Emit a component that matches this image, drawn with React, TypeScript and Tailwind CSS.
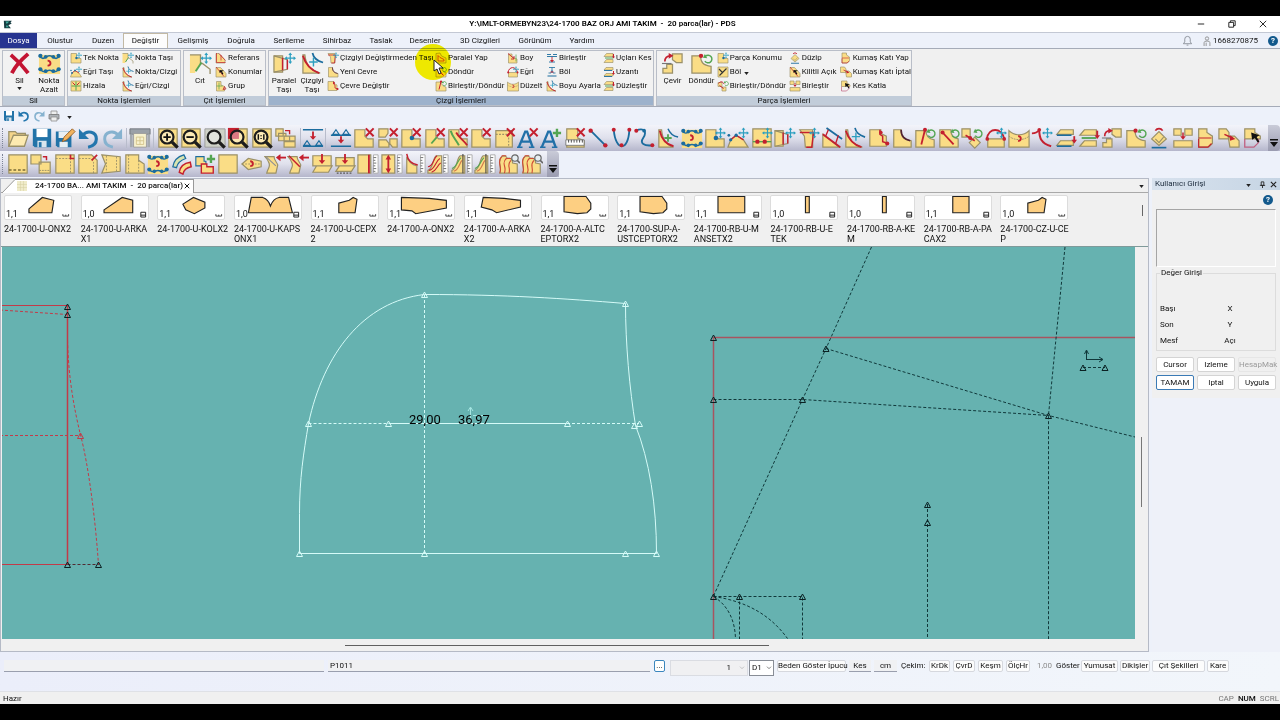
import type { ReactNode } from "react";

const Y = "#fadd86";
const O = "#9a9068";
const R = "#c4202f";
const B = "#1b6c9e";
const C = "#2d9fc0";
const G = "#53a552";

const yel = { fill: Y, stroke: O, strokeWidth: 1.3 };
const line = (c: string, w = 1.8) => ({ fill: "none", stroke: c, strokeWidth: w });

const cross = <path d="M14 1.5l8.5 8.5M22.5 1.5L14 10" {...line(R, 2.2)} />;
const plus = <path d="M18.5 2v9M14 6.5h9" {...line(G, 2.6)} />;
const move = (
  <g>
    <path d="M18 2v9M13.500 6.500h9" {...line(C, 1.3)} />
    <path d="M18 .5l2 2.500h-4zM18 12.500l2-2.500h-4zM12 6.500l2.500-2v4zM24 6.500l-2.500-2v4z" fill={C} />
  </g>
);
const turn = (
  <g>
    <path d="M16 4.500a4 4 0 1 1-.5 5" {...line(G, 1.5)} />
    <path d="M13.500 6l4.500.5-2.500-4.500z" fill={G} />
  </g>
);
const ruler = (
  <g>
    <path d="M18 2h5v20h-5z" fill="#fff" stroke="#aaa" strokeWidth="1" />
    <path d="M18 5h3M18 8h2M18 11h3M18 14h2M18 17h3M18 20h2" {...line("#666", 1)} />
  </g>
);
const lens = (
  <g>
    <circle cx="11" cy="11" r="7" fill="#ffffff66" stroke="#1d1d1d" strokeWidth="2.4" />
    <path d="M16.500 16.500l6 6" {...line("#1d1d1d", 3.6)} />
  </g>
);
const notched = <path d="M2 3h11v7l3 3h6v9H2z" {...yel} />;
const square = <path d="M2 2h20v20H2z" {...yel} />;

const ICONS = {
  folder: (
    <g>
      <path d="M2 21V5h7l2 2h9v3" fill="#f4d58a" stroke={O} strokeWidth="1.4" />
      <path d="M2 21L7 9h16l-4 12z" fill="#fdeab0" stroke={O} strokeWidth="1.4" />
    </g>
  ),
  save: (
    <g>
      <path d="M2 2h20v20H4l-2-2z" fill="#2273a8" />
      <path d="M6 2h12v9H6z" fill="#fff" />
      <path d="M7 15h10v7H7z" fill="#d9e6ee" />
      <path d="M8.500 16.500h3V22h-3z" fill="#2273a8" />
    </g>
  ),
  saveEdit: (
    <g>
      <path d="M2 5h17v17H4l-2-2z" fill="#2273a8" />
      <path d="M5 5h11v7H5zM6 16h9v6H6z" fill="#e8eff4" />
      <path d="M9 16l2-5 9-9 3 3-9 9z" fill="#f2b45f" stroke="#95602a" strokeWidth="1" />
    </g>
  ),
  undo: (
    <g>
      <path d="M5 9c5-6 15-4 15 4 0 5-4 8-9 9" {...line("#2476ad", 3.4)} />
      <path d="M1 2v11h11z" fill="#2476ad" />
    </g>
  ),
  redo: (
    <g>
      <path d="M19 9C14 3 4 5 4 13c0 5 4 8 9 9" {...line("#86b2cf", 3.2)} />
      <path d="M23 2v11H12z" fill="#86b2cf" />
    </g>
  ),
  plot: (
    <g>
      <path d="M1 2h22v6H1z" fill="#9ba1a8" stroke="#70757b" />
      <path d="M5 7h14v15H5z" fill="#f8f2cf" stroke="#999" />
      <path d="M8 11h8v8H8zM12 11v8M8 15h8" {...line("#d3c48c", 1)} />
      <path d="M1 8h3v14H1zM20 8h3v14h-3z" fill="#a4a9af" />
    </g>
  ),
  printer: (
    <g>
      <path d="M6 2h12v7H6z" fill="#eee" stroke="#888" strokeWidth="1.500" />
      <path d="M2 9h20v9H2z" fill="#aeb2b6" stroke="#777" strokeWidth="1.500" />
      <path d="M6 14h12v8H6z" fill="#eee" stroke="#888" strokeWidth="1.500" />
    </g>
  ),
  zoomIn: (
    <g>
      {square}
      {lens}
      <path d="M11 7v8M7 11h8" {...line("#111", 2)} />
    </g>
  ),
  zoomOut: (
    <g>
      {square}
      {lens}
      <path d="M7 11h8" {...line("#111", 2)} />
    </g>
  ),
  zoomFit: (
    <g>
      <path d="M1 2h22v20H1z" fill="#cfd2c8" stroke="#999" />
      {lens}
    </g>
  ),
  zoomArea: (
    <g>
      {square}
      <path d="M1 1h12v12H1z" fill={R} />
      {lens}
    </g>
  ),
  zoomOne: (
    <g>
      {square}
      {lens}
      <path d="M8 8v6M14 8v6M11 9v1M11 12v1" {...line("#111", 1.6)} />
    </g>
  ),
  arrange: (
    <g>
      <path d="M2 2h8v8H2zM5 7h8v8H5z" {...yel} />
      <path d="M11 10h12v5H11zM11 16h12v6H11zM17 10v5" {...yel} />
      <path d="M12 4h5v4" {...line(R, 1.5)} />
    </g>
  ),
  alignDown: (
    <g>
      <path d="M1 3h22M1 21h22" {...line(B, 1.4)} />
      <path d="M12 5v8" {...line(R, 2)} />
      <path d="M8.500 10h7L12 14z" fill={R} />
      <path d="M2 20l3.500-5L9 20zM15 20l3.500-5 3.500 5z" {...line(B, 1.2)} />
    </g>
  ),
  alignUp: (
    <g>
      <path d="M3 8l3.500-5L10 8zM14 8l3.500-5L21 8z" {...line(B, 1.2)} />
      <path d="M1 9h22M1 21h22" {...line(B, 1.4)} />
      <path d="M12 10v5" {...line(R, 2)} />
      <path d="M8.500 14h7L12 18z" fill={R} />
    </g>
  ),
  pieceX: <g>{notched}{cross}</g>,
  piecesX: (
    <g>
      <path d="M2 2h10v5l-3 4H2zM2 14h8l3 4v4H2zM14 13h8v9h-5l-3-4z" {...yel} />
      {cross}
    </g>
  ),
  pointX: <g>{notched}<circle cx="13" cy="12" r="2.500" fill={B} />{cross}</g>,
  notchX: <g>{notched}<path d="M8 18l6-7" {...line(G, 2)} />{cross}</g>,
  lineX: (
    <g>
      {notched}
      <path d="M4 4c2 7 6 10 9 16" {...line(G, 2.2)} />
      <path d="M10 6c3 6 8 8 12 14" {...line(R, 2)} />
      {cross}
    </g>
  ),
  dashX: (
    <g>
      <path d="M2 4h18v18H2z" {...yel} />
      <path d="M2 8h14v14" strokeDasharray="2 1.500" {...line(O, 1.2)} />
      {cross}
    </g>
  ),
  textX: (
    <g>
      <path d="M2 22l7-17h2l6 17M5 16h9" {...line("#2270a8", 2.6)} />
      <path d="M0 22h6M13 22h6" {...line("#2270a8", 1.6)} />
      {cross}
    </g>
  ),
  textPlus: (
    <g>
      <path d="M2 22l7-17h2l6 17M5 16h9" {...line("#2270a8", 2.6)} />
      <path d="M0 22h6M13 22h6" {...line("#2270a8", 1.6)} />
      {plus}
    </g>
  ),
  rulerX: (
    <g>
      <path d="M3 2h12v10l7 3v7H3z" {...yel} />
      <path d="M2 14h20v6H2z" fill="#fff" stroke="#777" />
      <path d="M5 14v3M8 14v3M11 14v3M14 14v3M17 14v3M20 14v3" {...line("#444", 1)} />
      {cross}
    </g>
  ),
  segment: (
    <g>
      <path d="M4 4l16 16" {...line(B, 2)} />
      <circle cx="4" cy="4" r="2.400" fill={R} />
      <circle cx="20" cy="20" r="2.400" fill={R} />
    </g>
  ),
  curveU: (
    <g>
      <path d="M3 3c2 24 16 24 17 0" {...line(B, 2)} />
      <circle cx="3" cy="3" r="2.200" fill={R} />
      <circle cx="20" cy="3" r="2.200" fill={R} />
      <circle cx="11.500" cy="20" r="2.200" fill={R} />
    </g>
  ),
  curveS: (
    <g>
      <path d="M2 4c10-4 12 2 8 8s1 9 10 8" {...line(B, 2)} />
      <circle cx="2.500" cy="4" r="2.200" fill={R} />
      <circle cx="11" cy="4" r="2" fill={B} />
      <circle cx="20" cy="20" r="2.200" fill={R} />
    </g>
  ),
  curvePlus: (
    <g>
      <path d="M2 3v19h16c-8-2-12-8-13-19z" {...yel} />
      <path d="M3 4c2 10 7 15 15 17" {...line(R, 2)} />
      <path d="M12 2c2 5 5 8 11 9" {...line(B, 1.600)} />
      <path d="M12 8v8M8 12h8" {...line(G, 2)} />
    </g>
  ),
  reduce: (
    <g>
      <path d="M1 3h22v20H1z" fill={Y} />
      <path d="M1 4c5 6 7 0 11 0s6 6 11 0M1 17c5 6 7 2 11 2s6 4 11-2" {...line(B, 1.600)} />
      <g fill={B}>
        <circle cx="2.500" cy="4" r="2.200" /><circle cx="8" cy="5" r="2" /><circle cx="16" cy="5" r="2" /><circle cx="21.500" cy="4" r="2.200" />
        <circle cx="2.500" cy="18" r="2.200" /><circle cx="8" cy="20" r="2" /><circle cx="16" cy="20" r="2" /><circle cx="21.500" cy="18" r="2.200" />
      </g>
      <path d="M10 9c4 0 4 6 0 5" {...line(R, 2)} />
    </g>
  ),
  pointMove: <g>{notched}<circle cx="13" cy="12" r="2.500" fill={B} />{move}</g>,
  curveMove: (
    <g>
      <path d="M1 22L4 14l6-5 8 5 5 8z" {...yel} />
      <path d="M4 14l6-5 8 5" {...line(R, 1.500)} />
      <g fill={B}><circle cx="4" cy="14" r="1.800" /><circle cx="10" cy="9" r="1.800" /><circle cx="2" cy="9" r="1.500" /></g>
      {move}
    </g>
  ),
  horizMove: (
    <g>
      {square}
      <path d="M2 16h20" {...line(G, 1.500)} />
      <circle cx="7" cy="16" r="2.400" fill={R} /><circle cx="15" cy="16" r="2.400" fill={R} />
      {move}
    </g>
  ),
  parallel: (
    <g>
      <path d="M1 4h9v17H1z" {...yel} />
      <path d="M1 4l14 4v10L1 21" {...line(O, 1.300)} />
      <path d="M10 6v13M15 8v10" {...line(R, 1.500)} />
      {move}
    </g>
  ),
  parallelTwo: (
    <g>
      <path d="M2 3h14v19H8l-1-12z" {...yel} />
      <path d="M2 6h15l-2 16H9" {...line(R, 1.600)} />
      {move}
    </g>
  ),
  slopes: (
    <g>
      <path d="M2 8v14h18z" {...yel} />
      <path d="M2 8l19 14" {...line(R, 2)} />
      <path d="M6 1l17 12" {...line(B, 2)} />
      <path d="M8 3L5 10M19 9l-3 9" {...line(R, 1.500)} />
    </g>
  ),
  lineMove: (
    <g>
      <path d="M2 3v19h18C9 19 5 13 4 3z" {...yel} />
      <path d="M2 4c3 10 8 15 17 18" {...line(R, 2)} />
      <path d="M12 1c1 5 4 8 11 10" {...line(B, 1.800)} />
      <path d="M13 6v9M8.500 10.500h9" {...line(C, 1.500)} />
    </g>
  ),
  contour: (
    <g>
      <path d="M2 3h12v4l6 3v11H2z" {...yel} />
      <path d="M13 3v5l3 2v6l6 2" {...line(R, 1.600)} />
      <circle cx="14" cy="6" r="2" fill={R} /><circle cx="21" cy="18" r="2.200" fill={R} />
    </g>
  ),
  corner: (
    <g>
      <path d="M3 3h8c0 8 3 11 11 12v7H3z" {...yel} />
      <path d="M11 3c0 8 4 10 10 12" {...line("#512130", 1.800)} />
    </g>
  ),
  rotateLine: (
    <g>
      <path d="M2 4h11c0 6 3 9 9 10v8H2z" {...yel} />
      <path d="M12 3L8 19" {...line(R, 2)} /><circle cx="12" cy="3" r="2.200" fill={R} />
      {turn}
    </g>
  ),
  rotateDiag: (
    <g>
      <path d="M2 3h12c0 6 2 9 8 10v9H2z" {...yel} />
      <path d="M5 6l12 13" {...line(R, 2)} /><circle cx="5" cy="6" r="2.200" fill={R} />
      {turn}
    </g>
  ),
  rotatePieces: (
    <g>
      <path d="M1 2h9v9H1zM9 17l6-6 6 6-6 6z" {...yel} />
      <path d="M5 9l10 6" {...line(R, 1.600)} /><circle cx="10" cy="12" r="2.200" fill={R} />
      {turn}
    </g>
  ),
  arcMove: (
    <g>
      <path d="M3 13h18v9H3z" {...yel} />
      <path d="M2 13C4 0 18 0 21 13" {...line(R, 2)} />
      <circle cx="2.500" cy="13" r="2" fill={R} /><circle cx="21" cy="13" r="2" fill={R} />
      {move}
    </g>
  ),
  smooth: (
    <g>
      <path d="M1 4c6 6 16 6 22 0v18H1z" {...yel} />
      <path d="M1 10c6 5 16 5 22 0" strokeDasharray="2 1" {...line(O, 1)} />
      <path d="M11 10c4 0 4 6 0 5" {...line(R, 2)} />
    </g>
  ),
  hookMove: (
    <g>
      <path d="M9 3c0 9 2 15 13 18" {...line(R, 2.200)} />
      <path d="M1 7c4 0 6-1 8-4" {...line(R, 2)} />
      <circle cx="9" cy="3" r="2" fill={R} />
      {move}
    </g>
  ),
  extendOne: (
    <g>
      <path d="M2 8l4-5h14v5zM2 20l4-5h14v5z" {...yel} />
      <path d="M2 9h16M2 21h16" {...line(B, 1.800)} />
      <path d="M21 10v6" {...line(R, 2)} /><path d="M18 14h6l-3 4z" fill={R} />
    </g>
  ),
  extendTwo: (
    <g>
      <path d="M2 9l5-6h13v6zM2 21l5-6h13v6z" {...yel} />
      <path d="M4 12h16" {...line(G, 2)} />
      <path d="M21 4v7" {...line(R, 2)} /><path d="M18 9h6l-3 4z" fill={R} />
    </g>
  ),
  flip: (
    <g>
      <path d="M12 2h10v9h-6l-4-3zM2 22h10v-9H6v4H2z" {...yel} />
      <path d="M1 12h10" {...line("#777", 1.200)} />
      <path d="M4 10c0-4 2-6 6-6" {...line(R, 1.800)} /><path d="M8 1l5 3-5 3z" fill={R} />
    </g>
  ),
  rotate: (
    <g>
      <path d="M2 4h9c0 7 3 10 11 11v7H2z" {...yel} />
      <circle cx="11.500" cy="4" r="2.300" fill={R} />
      {turn}
    </g>
  ),
  ninety: (
    <g>
      <path d="M4 13l8-8 8 8-8 7z" {...yel} />
      <path d="M8 13l4 4 5-6" {...line(O, 1.200)} />
      <path d="M8 4c2-3 6-3 8 0" {...line(R, 1.800)} />
      <path d="M4 22.500h16" {...line(B, 1.800)} />
    </g>
  ),
  join: (
    <g>
      <path d="M2 2h8v7H2zM14 2h8v7h-8zM2 15h20v7H2z" {...yel} />
      <path d="M12 6v5" {...line(R, 1.600)} /><path d="M9 10h6l-3 4z" fill={R} />
    </g>
  ),
  fold: (
    <g>
      <path d="M4 2h9v4l6 4v8l-4 4H4z" {...yel} />
      <path d="M4 12h14M4 13v9h10l4-4" {...line(R, 1.200)} />
    </g>
  ),
  foldCancel: (
    <g>
      <path d="M1 2h8l3 4v7H1zM11 10h7l5 5v7H13z" {...yel} />
      <path d="M7 8l9 4" {...line(R, 1.500)} /><path d="M13 9l6 4-6 2z" fill={R} />
    </g>
  ),
  foldCut: (
    <g>
      <path d="M3 2h11v4l6 4v3H3z" {...yel} />
      <path d="M3 13v9h10l5-5v-4" {...line("#c06080", 1.400)} />
      <path d="M10 6l9 3-3 2 3 5-2 1-3-5-3 2z" fill="#111" />
    </g>
  ),
  hem: <g><path d="M2 2h20v20H2z" {...yel} /><path d="M2 18.500h20" strokeDasharray="3 2" {...line("#7b6b35", 1.500)} /></g>,
  copyRect: (
    <g>
      <path d="M1 2h11v10H1zM10 10h12v12H10z" {...yel} />
      <path d="M14 4h4v4" {...line(R, 1.600)} /><path d="M10 19h12" strokeDasharray="2 1" {...line(O, 1)} />
    </g>
  ),
  cornerRect: <g>{square}<path d="M2 6h20M18 2v20" strokeDasharray="2 1.500" {...line(O, 1)} /><path d="M18 2v4h4" {...line(R, 1.800)} /></g>,
  chamfer: <g><path d="M2 2h14l6 6v14H2z" {...yel} /><path d="M2 6h13l3 4v12" strokeDasharray="2 1.500" {...line(O, 1)} /><path d="M22 2l-6 6" {...line(R, 1.800)} /></g>,
  trapezoid: <g><path d="M2 2l20 2v16L2 22l4-10z" {...yel} /><path d="M7 3v18M18 4v16" strokeDasharray="2 1.500" {...line(O, 1)} /></g>,
  notchDash: <g><path d="M2 2h14v6l6 4v10H2z" {...yel} /><path d="M5 2v20M16 8v14" strokeDasharray="2 1.500" {...line(O, 1)} /></g>,
  arcs: (
    <g>
      <path d="M2 15C3 8 7 4 14 2l2 4C10 8 7 11 6 16z" fill="#d8e3b0" stroke={B} strokeWidth="1.400" />
      <path d="M9 21c1-7 5-10 12-11l1 5c-5 1-8 3-9 8z" fill={Y} stroke={R} strokeWidth="1.600" />
    </g>
  ),
  combine: (
    <g>
      <path d="M2 4h9v5h2v5H2z" fill={Y} stroke={B} strokeWidth="1.200" />
      <path d="M8 12h6v3h7v7H8z" fill={Y} stroke={R} strokeWidth="1.500" />
      {plus}
    </g>
  ),
  square: <path d="M2 2h20v20H2z" {...yel} />,
  dart: (
    <g>
      <path d="M1 12l7-6 14 3v6L8 18z" {...yel} />
      <path d="M1 12h21" strokeDasharray="2 1.500" {...line(O, 1)} />
      <path d="M10 9c4 0 4 6 0 5" {...line(R, 2)} />
    </g>
  ),
  wave: (
    <g>
      <path d="M3 22c1-6 5-7 2-12-1-3-3-5-4-6h10c0 4 3 6 4 9l-2 9z" {...yel} />
      <path d="M2 4l11 10" {...line("#8d8f96", 1.300)} />
      <path d="M17 5h7" {...line(R, 2)} /><path d="M13 5l5-4v8z" fill={R} />
    </g>
  ),
  waveLine: (
    <g>
      <path d="M3 22c1-6 5-7 2-12-1-3-3-5-4-6h10c0 4 3 6 4 9l-2 9z" {...yel} />
      <path d="M2 3l12 12" {...line(R, 1.600)} />
      <path d="M17 5h7" {...line(R, 2)} /><path d="M13 5l5-4v8z" fill={R} />
    </g>
  ),
  press: (
    <g>
      <path d="M2 3h20v11H2zM2 21l4-7h17l-4 7z" {...yel} />
      <path d="M12 1v8" {...line(R, 2)} /><path d="M8.500 8h7L12 12z" fill={R} />
    </g>
  ),
  pressDash: (
    <g>
      <path d="M2 5h20v9H2zM2 20l4-6h17l-4 6z" {...yel} />
      <path d="M3 22h16" strokeDasharray="2 1.500" {...line("#555", 1.300)} />
      <path d="M12 1v8" {...line(R, 2)} /><path d="M8.500 8h7L12 12z" fill={R} />
    </g>
  ),
  redRuler: <g><path d="M1 2h14v20H1z" {...yel} /><path d="M13 2v20" {...line(R, 2)} />{ruler}</g>,
  heightRuler: (
    <g>
      <path d="M1 2h14v20H1z" {...yel} />
      <path d="M8 4v16" {...line(R, 2)} /><path d="M5 7h6L8 2zM5 17h6l-3 5z" fill={R} />{ruler}
    </g>
  ),
  curveRuler: <g><path d="M3 4c2 6 5 9 11 10v8H3z" {...yel} /><path d="M3 1c1 7 5 11 12 12" {...line(R, 1.600)} />{ruler}</g>,
  fan: (
    <g>
      <path d="M1 19c6-2 5-13 9-16h6v19H1z" {...yel} />
      <path d="M1 15c6 0 6-10 10-12M2 19c7-1 7-10 12-13M5 21c6-2 6-8 10-10" {...line(R, 1.200)} />{ruler}
    </g>
  ),
  fanColor: (
    <g>
      <path d="M1 19c6-2 5-13 9-16h5v19H1z" {...yel} />
      <path d="M1 17c6-2 6-9 10-12" {...line(G, 1.200)} /><path d="M3 20c6-2 6-9 9-12" {...line("#d0784a", 1.200)} /><path d="M13 1v21" {...line("#444", 1.200)} />{ruler}
    </g>
  ),
  layers: (
    <g>
      <path d="M2 22c3-8-4-12 2-18 3-2 6 0 6 2 3-1 6 0 6 5l5 1v10z" {...yel} />
      <path d="M2 22c3-8-4-12 2-18M7 22c3-8-4-10 2-16M12 22c2-7-3-8 2-14M4 3h5M9 6h5" {...line("#cf4a35", 1.200)} />
      <circle cx="18.500" cy="5.500" r="3.500" fill="#e6eef2" stroke="#666" strokeWidth="1.300" /><path d="M21 8l3 3" {...line("#666", 1.800)} />
    </g>
  ),
  deleteBig: <path d="M3 3c6 5 12 11 18 19M21 2C14 8 8 14 4 22" {...line("#c31432", 4)} />,
  notchBig: (
    <g>
      <path d="M1 3h11v9l-6 10H1z" fill={Y} />
      <path d="M1 3h11v9h2l8 6v5" {...line(O, 1.400)} /><path d="M13 11l-6 9" {...line(G, 2)} />{move}
    </g>
  ),
  reference: (
    <g>
      <path d="M2 3h6l12 13v6H2z" {...yel} />
      <path d="M3 2v19h18M8 3l13 14M12 6v11" {...line(R, 1.400)} />
    </g>
  ),
  positions: <g><path d="M2 3h9l11 12v7H2z" {...yel} /><path d="M2 2l16 19" {...line(R, 1.500)} /><path d="M9 8l9 1-4 2 3 5-3 1-2-5-3 2z" fill="#111" /></g>,
  group: <g><path d="M3 3h9v7l7 3v9H3z" {...yel} /><path d="M8 5v14M3 12h12" {...line(G, 1.400)} /><path d="M19 13l3 5-6 1z" {...line(R, 1.500)} /></g>,
  align: <g>{square}<path d="M12 3v18M3 12h18" {...line(G, 2)} /><path d="M5 5l5 5M19 5l-5 5" {...line(R, 2)} /></g>,
  parallelMake: <g><path d="M2 22V3l8-1 3 6 9 4v10z" {...yel} /><path d="M6 18V7l4 4 8 4v3z" {...line(R, 1.400)} /></g>,
  length: <g><path d="M3 4h7v6l10 4v8H3z" {...yel} /><path d="M2 3l12 10M14 8v6H8" {...line(R, 1.800)} /><path d="M18 5v14" {...line(G, 1.500)} /></g>,
  splitLine: <g><path d="M3 20h18" {...line(B, 2)} /><path d="M5 14h5l2-5 2 5h5M12 3v7M6 3h12" {...line(B, 1.600)} /><path d="M9 12h6" {...line(R, 2)} /></g>,
  joinLine: <g><path d="M2 5h8M14 5h8M2 9h20M6 20h12" {...line(B, 1.800)} /><path d="M12 10v9" {...line(R, 1.800)} /><path d="M8 16h8l-4 5z" fill={R} /></g>,
  splitPiece: <g>{square}<path d="M5 19L19 5M4 6l8 8" {...line("#333", 2.200)} /></g>,
  joinTurn: <g><path d="M2 5h8v8H2zM10 14h8v8h-8z" {...yel} /><path d="M5 11l8 6M3 7c5-6 9-3 11 1" {...line(R, 2)} />{turn}</g>,
  logo: (
    <g>
      <path d="M2 4h19l-3 5 3 2-8 4 6 7H3z" fill="#173d42" />
      <path d="M6 6h9l-6 6zM9 14l5 6H7z" fill="#40aa9b" />
    </g>
  ),
} satisfies Record<string, ReactNode>;

type IconName = keyof typeof ICONS;

function Icon({ name, className = "size-[22px]" }: { name: IconName; className?: string }) {
  return (
    <svg viewBox="0 0 24 24" aria-hidden="true" className={"shrink-0 " + className}>
      {ICONS[name]}
    </svg>
  );
}

const TABS: [string, string][] = [
  ["Olustur", "w-[46px]"],
  ["Duzen", "w-10"],
  ["Değiştir", "w-[45px]"],
  ["Gelişmiş", "w-[50px]"],
  ["Doğrula", "w-[46px]"],
  ["Serileme", "w-[50px]"],
  ["Sihirbaz", "w-[46px]"],
  ["Taslak", "w-[42px]"],
  ["Desenler", "w-[46px]"],
  ["3D Cizgileri", "w-16"],
  ["Görünüm", "w-[46px]"],
  ["Yardım", "w-12"],
];

function Big({ icon, label, width, caret }: { icon: IconName; label: string; width: string; caret?: boolean }) {
  return (
    <button type="button" className={"flex shrink-0 flex-col items-center justify-start text-center leading-[9px] " + width}>
      <Icon name={icon} className="mt-px mb-px size-[23px]" />
      {label.split("|").map((part) => (
        <span key={part}>{part}</span>
      ))}
      {caret && <Caret />}
    </button>
  );
}

function Caret() {
  return (
    <svg viewBox="0 0 6 4" className="mt-[2px] h-[3px] w-[5px]" aria-hidden="true">
      <path d="M0 0h6L3 4z" fill="#222" />
    </svg>
  );
}

function Column({ items, width = "" }: { items: [IconName, string][]; width?: string }) {
  return (
    <div className={"flex shrink-0 flex-col " + width}>
      {items.map(([icon, label]) => (
        <button key={label} type="button" className="flex h-[14px] items-center gap-px whitespace-nowrap">
          <Icon name={icon} className="size-3" />
          {label}
          {label === "Böl" && icon === "splitPiece" && <span className="ml-[2px]"><Caret /></span>}
        </button>
      ))}
    </div>
  );
}

function Group({ title, width, active, children }: { title: string; width: string; active?: boolean; children: ReactNode }) {
  return (
    <section aria-label={title} className={"flex shrink-0 flex-col border border-[#b9bec8] bg-[#f2f2f2] " + width}>
      <div className="flex h-[45px] pl-px">{children}</div>
      <h2 className={"h-[9px] text-center leading-[9px] " + (active ? "bg-[#9db2cc]" : "bg-[#c1ccd9]")}>{title}</h2>
    </section>
  );
}

function Ribbon() {
  return (
    <div className="relative flex h-[59px] gap-[2px] border-y border-[#a5abb8] bg-[#f0f0f0] pt-px pl-[2px]">
      <Group title="Sil" width="w-[63px]">
        <Big icon="deleteBig" label="Sil" width="w-[31px]" caret />
        <Big icon="reduce" label="Nokta|Azalt" width="w-7" />
      </Group>
      <Group title="Nokta İşlemleri" width="w-[114px]">
        <div className="w-px" />
        <Column width="w-[52px]" items={[["pointMove", "Tek Nokta"], ["curveMove", "Eğri Taşı"], ["align", "Hizala"]]} />
        <Column items={[["notchBig", "Nokta Taşı"], ["lineMove", "Nokta/Cizgi"], ["lineMove", "Eğri/Cizgi"]]} />
      </Group>
      <Group title="Çıt İşlemleri" width="w-[83px]">
        <Big icon="notchBig" label="Cıt" width="w-[30px]" />
        <Column items={[["reference", "Referans"], ["positions", "Konumlar"], ["group", "Grup"]]} />
      </Group>
      <Group title="Çizgi İşlemleri" width="w-[386px]" active>
        <Big icon="parallel" label="Paralel|Taşı" width="w-7" />
        <Big icon="lineMove" label="Çizgiyi|Taşı" width="w-7" />
        <div className="w-px" />
        <Column width="w-[108px]" items={[["parallelTwo", "Çizgiyi Değiştirmeden Taşı"], ["corner", "Yeni Cevre"], ["contour", "Çevre Değiştir"]]} />
        <Column width="w-[72px]" items={[["parallelMake", "Paralel Yap"], ["rotateDiag", "Döndür"], ["rotateLine", "Birleştir/Döndür"]]} />
        <Column width="w-[39px]" items={[["length", "Boy"], ["arcMove", "Eğri"], ["smooth", "Düzelt"]]} />
        <Column width="w-[57px]" items={[["joinLine", "Birleştir"], ["splitLine", "Böl"], ["lineMove", "Boyu Ayarla"]]} />
        <Column items={[["extendTwo", "Uçları Kes"], ["extendOne", "Uzantı"], ["extendTwo", "Düzleştir"]]} />
      </Group>
      <Group title="Parça İşlemleri" width="w-[256px]">
        <Big icon="flip" label="Çevir" width="w-[29px]" />
        <Big icon="rotate" label="Döndür" width="w-[29px]" />
        <div className="w-[2px]" />
        <Column width="w-[72px]" items={[["pointMove", "Parça Konumu"], ["splitPiece", "Böl"], ["joinTurn", "Birleştir/Döndür"]]} />
        <Column width="w-[51px]" items={[["ninety", "Düzip"], ["positions", "Kilitli Açık"], ["join", "Birleştir"]]} />
        <Column items={[["fold", "Kumaş Katı Yap"], ["foldCancel", "Kumaş Katı İptal"], ["foldCut", "Kes Katla"]]} />
      </Group>
      <svg viewBox="0 0 40 44" aria-hidden="true" className="pointer-events-none absolute -top-2 left-[413px] h-11 w-10 mix-blend-multiply">
        <circle cx="20" cy="21" r="18" fill="#fbf500" />
      </svg>
      <svg viewBox="0 0 12 16" aria-hidden="true" className="pointer-events-none absolute top-[10px] left-[433px] h-4 w-3">
        <path d="M1 1v11l3-2 2 5 2-1-2-5h4z" fill="#fff" stroke="#222" strokeWidth="1" />
      </svg>
    </div>
  );
}

const FILE_TOOLS: IconName[] = ["folder", "save", "saveEdit", "undo", "redo"];
const ZOOM_TOOLS: IconName[] = ["zoomIn", "zoomOut", "zoomFit", "zoomArea", "zoomOne", "arrange"];
const EDIT_TOOLS: IconName[] = [
  "alignUp", "pieceX", "piecesX", "pointX", "notchX", "lineX", "pieceX", "dashX", "textX", "textPlus",
  "rulerX", "segment", "curveU", "curveS", "curvePlus", "reduce", "pointMove", "curveMove", "horizMove", "parallel",
  "parallelTwo", "slopes", "lineMove", "contour", "corner", "rotateLine", "rotateDiag", "rotatePieces", "arcMove", "smooth",
  "hookMove", "extendOne", "extendTwo", "flip", "rotate", "ninety", "join", "fold", "foldCancel", "foldCut",
];
const PIECE_TOOLS: IconName[] = [
  "hem", "copyRect", "cornerRect", "chamfer", "trapezoid", "notchDash", "reduce", "arcs", "combine", "square", "dart",
  "wave", "waveLine", "press", "pressDash", "redRuler", "heightRuler", "curveRuler", "fan", "fanColor", "fanColor", "layers", "layers",
];

function Tools({ names, className = "" }: { names: IconName[]; className?: string }) {
  return (
    <div className={"flex items-center justify-between " + className}>
      {names.map((name, i) => (
        <button key={name + i} type="button" aria-label={name}>
          <Icon name={name} />
        </button>
      ))}
    </div>
  );
}

const Grip = () => <div className="mr-1 ml-[2px] h-5 w-px border-l border-dotted border-[#7d8496]" />;
const Bar = () => <div className="h-5 w-px bg-[#b8bccb]" />;

function More() {
  return (
    <button type="button" aria-label="Araç çubuğu seçenekleri" className="flex w-3 shrink-0 items-end justify-center self-stretch rounded-r-sm bg-gradient-to-b from-[#c9cbd8] to-[#9a9bb0] pb-1">
      <svg viewBox="0 0 8 8" className="size-2" aria-hidden="true">
        <path d="M0 0h8v1.500H0zM0 3h8L4 8z" fill="#111" />
      </svg>
    </button>
  );
}

const BAR_BG = "bg-gradient-to-b from-[#f3f4fa] via-[#dfe0ec] to-[#b5b6cb]";

const SHAPES = {
  on: "M24 14l14-12 12 3-2 13H24z",
  arka: "M22 15l19-13 11 3v13H22z",
  kol: "M25 9L36 2l12 5v6l-11 6-9-4z",
  kaps: "M16 2h12q6 2 8 9 3-8 9-9h10l4 16H13z",
  cep: "M27 8l11-3 4-3 4 2-2 14H27z",
  aOn: "M13 2l29 1 18 2v8l-32 6-4-3-11-1z",
  aArka: "M18 2l22 1 17 2v7l-25 6-5-3-11-3z",
  alt: "M22 1h23l5 7v6l-4 4-10 1-14-2z",
  manset: "M23 1h28v17H23z",
  strip: "M35 1h4v17h-4z",
  paca: "M28 1h17v17H28z",
};

const PARTS: [keyof typeof SHAPES, string, string, string][] = [
  ["on", "1,1", "24-1700-U-ONX2", ""],
  ["arka", "1,0", "24-1700-U-ARKA", "X1"],
  ["kol", "1,1", "24-1700-U-KOLX2", ""],
  ["kaps", "1,0", "24-1700-U-KAPS", "ONX1"],
  ["cep", "1,1", "24-1700-U-CEPX", "2"],
  ["aOn", "1,1", "24-1700-A-ONX2", ""],
  ["aArka", "1,1", "24-1700-A-ARKA", "X2"],
  ["alt", "1,1", "24-1700-A-ALTC", "EPTORX2"],
  ["alt", "1,1", "24-1700-SUP-A-", "USTCEPTORX2"],
  ["manset", "1,1", "24-1700-RB-U-M", "ANSETX2"],
  ["strip", "1,0", "24-1700-RB-U-E", "TEK"],
  ["strip", "1,0", "24-1700-RB-A-KE", "M"],
  ["paca", "1,1", "24-1700-RB-A-PA", "CAX2"],
  ["cep", "1,0", "24-1700-CZ-U-CE", "P"],
];
const BOXED = [1, 3, 9, 10, 11, 12];

function Part({ index }: { index: number }) {
  const [shape, count, first, second] = PARTS[index];
  return (
    <button type="button" className="min-w-0 text-left text-[9px] leading-[10px] whitespace-nowrap">
      <span className="flex h-[25px] w-[68px] items-end rounded-xs border border-[#dcdcdc] bg-white">
        <span className="w-0 pl-px leading-[9px]">{count}</span>
        <svg viewBox="0 0 68 24" className="h-6 w-[66px]" aria-hidden="true">
          <path d={SHAPES[shape]} fill="#fdcf82" stroke="#222" strokeWidth="1.200" />
          {BOXED.includes(index) ? (
            <path d="M60.500 17.500h5v5h-5zM60.500 20.500h5" fill="none" stroke="#222" />
          ) : (
            <path d="M59.500 19.500v2h6v-2M62.500 20v1.500" fill="none" stroke="#444" />
          )}
        </svg>
      </span>
      <span className="mt-1 block">{first}</span>
      <span className="block">{second}</span>
    </button>
  );
}

function Marks({ at, stroke }: { at: [number, number][]; stroke: string }) {
  return (
    <g fill="none" stroke={stroke} strokeWidth="1">
      {at.map(([x, y]) => (
        <path key={x + "-" + y} d={`M${x - 3} ${y + 2.5}h6l-3-5.500z`} />
      ))}
    </g>
  );
}

function Canvas() {
  return (
    <div className="relative min-w-0 flex-1 overflow-hidden bg-[#66b2b0]">
      <svg className="absolute inset-0 h-full w-full" role="img" aria-label="Kalıp çizimi">
        <g transform="translate(-2 -247)" fill="none" strokeWidth="1">
          <g stroke="#c23b48">
            <path d="M0 305.500h67M0 564.500h67" />
            <path d="M67.500 305v260" strokeWidth="1.500" />
            <path strokeDasharray="3 2" d="M0 310l67 4.500M0 435.500h80M67.500 340c1 40 7 70 13 95 8 30 15 85 18 130" />
            <path d="M1135 337.500H713.500V640" stroke="#a8545f" strokeWidth="1.500" />
          </g>
          <path d="M67.500 564.500h31" stroke="#502b33" strokeDasharray="3 2" />
          <g stroke="#d5fbf8">
            <path d="M299.500 553.500v-40c0-35 4-60 9-90 15-70 55-122 116-129 80 0 140 4 201 9 0 40 4 85 10 122 14 35 21 80 21 128z" />
            <path d="M388.500 423.500h178" />
            <path strokeDasharray="3 2" d="M424.500 295v258M308.500 423.500h80M567 423.500h72" />
            <path d="M470.500 421v-13M468 411l2.500-4 2.500 4M473 415.500h15" stroke="#a5e6e2" />
          </g>
          <Marks stroke="#d5fbf8" at={[[424.5, 295], [625.5, 304], [308.5, 424], [388.5, 424], [567.5, 424], [634.5, 426], [639.5, 424], [299.5, 554], [424.5, 554], [625.5, 554], [656.5, 554]]} />
          <g stroke="#10383a" strokeDasharray="3 2">
            <path d="M871.500 247L826 348.500 802.500 399.500 713.500 596M1065 247l-16.500 168V640M826 348.500L1048.500 415.500 1135 437M713.500 399.500h89l246 16" />
            <path d="M927.500 504v136M713.500 596.500h89V640M739.500 596.500V640M713.500 596.500c15 9 22 25 22 44M713.500 596.500c35 5 58 20 74 42M1083 367.500h22" />
          </g>
          <path d="M1086.500 360v-9M1084.500 354l2-4 2 4M1086.500 359.500h16M1099 357l4 2.500-4 2.500" stroke="#10383a" />
          <Marks stroke="#0a2022" at={[[67.5, 307], [67.5, 315], [67.5, 565], [98.5, 565], [713.5, 338], [713.5, 400], [802.5, 400], [826, 349], [1048.5, 416], [927.5, 505], [927.5, 523], [713.5, 597], [739.5, 597], [802.5, 597], [1083, 368], [1105, 368]]} />
          <Marks stroke="#c23b48" at={[[80.5, 436]]} />
        </g>
      </svg>
      <span className="absolute top-[165px] left-[407px] text-[13px] leading-4 text-black">29,00</span>
      <span className="absolute top-[165px] left-[456px] text-[13px] leading-4 text-black">36,97</span>
    </div>
  );
}

function Help() {
  return (
    <button type="button" aria-label="Yardım" className="size-[10px] rounded-full bg-[#12598c] text-center text-[8px] leading-[10px] font-bold text-white">?</button>
  );
}

function Panel() {
  return (
    <aside className="flex w-32 shrink-0 flex-col bg-[#eef1f9]">
      <header className="flex h-3 items-center gap-2 bg-gradient-to-r from-[#d8e2ee] to-[#c6d5e4] px-[3px] text-[#1c2b3c]">
        <h2 className="flex-1 leading-3">Kullanıcı Girişi</h2>
        <Caret />
        <svg viewBox="0 0 8 8" className="-mr-1 size-[7px]" aria-hidden="true"><path d="M2.500 1h3v4h-3zM1 5h6M4 5v3" fill="none" stroke="#222" /></svg>
        <svg viewBox="0 0 8 8" className="size-[7px]" aria-hidden="true"><path d="M1 1l6 6M7 1L1 7" fill="none" stroke="#222" strokeWidth="1.300" /></svg>
      </header>
      <div className="bg-[#f0f0f0] px-1 pb-2">
        <div className="flex h-[19px] items-center justify-end pr-[3px]"><Help /></div>
        <textarea aria-label="Mesaj" className="block h-[58px] w-full resize-none border border-t-[#a5a5a5] border-r-white border-b-white border-l-[#a5a5a5]" />
        <fieldset className="h-[84px] border border-[#dcdcdc] px-[3px]">
          <legend className="px-px leading-[12px]">Değer Girişi</legend>
          <div className="h-[22px]" />
          {[["Başı", "X"], ["Son", "Y"], ["Mesf", "Açı"]].map(([a, b]) => (
            <div key={a} className="flex h-4 items-center">
              <label className="flex flex-1 items-center">
                {a}
                <input className="h-3 w-8 min-w-0" />
              </label>
              <label className="flex w-12 items-center">
                <span className="w-3 text-center">{b}</span>
                <input className="h-3 w-8 min-w-0" />
              </label>
            </div>
          ))}
        </fieldset>
        <div className="mt-[6px] grid grid-cols-3 gap-[3px]">
          {["Cursor", "Izleme", "HesapMak", "TAMAM", "Iptal", "Uygula"].map((label) => (
            <button
              key={label}
              type="button"
              disabled={label === "HesapMak"}
              className={
                "h-[15px] rounded-xs border leading-[13px] whitespace-nowrap " +
                (label === "HesapMak"
                  ? "border-[#e6e6e6] text-[#9b9b9b]"
                  : label === "TAMAM"
                    ? "border-[#3a7ab5] bg-white"
                    : "border-[#d4d4d4] bg-white")
              }
            >
              {label}
            </button>
          ))}
        </div>
      </div>
    </aside>
  );
}

function Small({ label, width }: { label: string; width: string }) {
  return (
    <button type="button" className={"h-3 shrink-0 rounded-xs border border-[#d6d8de] bg-[#fcfcfc] leading-[10px] whitespace-nowrap " + width}>
      {label}
    </button>
  );
}

function BottomBar() {
  return (
    <div className="flex h-[39px] items-start bg-gradient-to-r from-[#ebeefa] to-[#f2f6fb] pt-2 pl-1">
      <input aria-label="Mesaj" className="mr-1 h-3 min-w-0 flex-1 border-b border-[#9a9fae] bg-[#f0f1f3]" />
      <input aria-label="Parça" defaultValue="P1011" className="mr-1 h-3 min-w-0 flex-1 border-b border-[#9a9fae] bg-[#f0f1f3] pl-[2px]" />
      <button type="button" className="mr-[5px] h-3 w-[11px] shrink-0 rounded-xs border border-[#3b86be] bg-white leading-[8px]">...</button>
      <select aria-label="Adet" className="mr-[3px] h-4 w-[78px] shrink-0 appearance-none border border-[#dadce2] bg-[#f0f0f2] pr-4 text-right">
        <option>1</option>
      </select>
      <svg viewBox="0 0 8 6" className="mt-[6px] mr-1 -ml-3 h-1 w-[6px] shrink-0" aria-hidden="true"><path d="M1 1l3 3 3-3" fill="none" stroke="#aaa" /></svg>
      <select aria-label="Beden" className="h-4 w-[25px] shrink-0 appearance-none border border-[#888d96] bg-white pl-[2px]">
        <option>D1</option>
      </select>
      <svg viewBox="0 0 8 6" className="mt-[6px] mr-[5px] -ml-2 h-1 w-[6px] shrink-0" aria-hidden="true"><path d="M1 1l3 3 3-3" fill="none" stroke="#444" /></svg>
      <Small label="Beden Göster İpucu" width="mr-[3px] w-[69px]" />
      <button type="button" className="mr-[3px] h-3 w-[22px] shrink-0 border-b border-[#9a9fae] bg-[#f0f1f3]">Kes</button>
      <button type="button" className="mr-1 h-3 w-[23px] shrink-0 border-b border-[#9a9fae] bg-[#f0f1f3]">cm</button>
      <span className="w-7 shrink-0 leading-3">Çekim:</span>
      <div className="flex shrink-0 gap-[3px]">
        <Small label="KrDk" width="w-[21px]" />
        <Small label="ÇvrD" width="w-[22px]" />
        <Small label="Keşm" width="w-[25px]" />
        <Small label="ÖlçHr" width="w-6" />
      </div>
      <span className="ml-[7px] w-[19px] shrink-0 leading-3 text-[#8d8d8d]">1,00</span>
      <span className="mr-px w-6 shrink-0 leading-3">Göster</span>
      <div className="flex shrink-0 gap-[2px] pr-[51px]">
        <Small label="Yumusat" width="w-[37px]" />
        <Small label="Dikişler" width="w-[30px]" />
        <Small label="Çıt Şekilleri" width="w-[53px]" />
        <Small label="Kare" width="w-[22px]" />
      </div>
    </div>
  );
}

export default function App() {
  return (
    <div className="flex h-screen min-h-[480px] flex-col overflow-hidden bg-black py-4 font-[Roboto,'Noto_Sans',sans-serif] text-[8px] text-[#111]">
      <header className="flex h-4 shrink-0 items-center bg-white px-[3px]">
        <Icon name="logo" className="size-[10px]" />
        <h1 className="flex-1 pr-[85px] text-center text-[8px] leading-4 font-semibold whitespace-pre text-black">
          {"Y:\\IMLT-ORMEBYN23\\24-1700 BAZ ORJ AMI TAKIM  -  20 parca(lar) - PDS"}
        </h1>
        <div className="-ml-20 flex w-20 items-center justify-between pr-[10px]">
          {["M1 5h8", "M1 3h6v6H1zM3 3V1h6v6H7", "M1 1l8 8M9 1L1 9"].map((d, i) => (
            <button key={d} type="button" aria-label={["Küçült", "Geri yükle", "Kapat"][i]}>
              <svg viewBox="0 0 10 10" className="size-2"><path d={d} fill="none" stroke="#222" strokeWidth="1.200" /></svg>
            </button>
          ))}
        </div>
      </header>

      <nav className="flex h-4 shrink-0 items-end border-t border-[#c3c8d4] bg-[#edf1fa]">
        <button type="button" className="h-[15px] w-[37px] bg-[#273590] text-white">Dosya</button>
        {TABS.map(([label, width]) => (
          <button
            key={label}
            type="button"
            className={"h-[15px] shrink-0 " + width + (label === "Değiştir" ? " border border-b-0 border-[#c2b9a4] bg-[#fcfcfc]" : "")}
          >
            {label}
          </button>
        ))}
        <div className="ml-auto flex h-[15px] items-center gap-px pr-[2px]">
          <svg viewBox="0 0 12 12" className="mr-2 size-[11px]" aria-hidden="true"><path d="M1.500 9.500h9L9 7.500V4.500a3 3 0 0 0-6 0v3zM5 11h2" fill="none" stroke="#8a8f98" /></svg>
          <svg viewBox="0 0 12 12" className="size-[10px]" aria-hidden="true"><circle cx="6" cy="3" r="2" fill="none" stroke="#888" /><path d="M2.500 12V8q0-2 3.500-2t3.500 2v4M5 12V8" fill="none" stroke="#888" /></svg>
          <span className="mr-[9px]">1668270875</span>
          <Help />
        </div>
      </nav>

      <div className="shrink-0"><Ribbon /></div>

      <div className="flex h-[18px] shrink-0 items-center gap-[3px] bg-[#edf1fa] px-[3px]">
        {(["save", "undo", "redo", "printer"] as IconName[]).map((name) => (
          <button key={name} type="button" aria-label={name}><Icon name={name} className="size-3" /></button>
        ))}
        <span className="ml-1"><Caret /></span>
      </div>

      <div className="shrink-0 bg-[#edf1fa]">
        <div className={"flex h-[26px] items-center " + BAR_BG}>
          <Grip />
          <Tools names={FILE_TOOLS} className="mr-[3px] w-[116px]" />
          <Bar />
          <Tools names={["plot"]} className="mx-[2px]" />
          <Bar />
          <Tools names={ZOOM_TOOLS} className="mr-1 ml-[3px] w-[139px]" />
          <Bar />
          <Tools names={["alignDown"]} className="mx-px" />
          <Bar />
          <Tools names={EDIT_TOOLS} className="mr-1 ml-1 min-w-0 flex-1" />
          <More />
        </div>
        <div className="flex h-[26px]">
          <div className={"flex items-center " + BAR_BG}>
            <Grip />
            <Tools names={PIECE_TOOLS} className="mr-1 w-[536px]" />
            <More />
          </div>
        </div>
      </div>

      <div className="flex min-h-0 flex-1 gap-[3px] bg-[#edf1fa] pt-px">
        <main className="flex min-w-0 flex-1 flex-col border border-[#b5bac6] bg-[#f0f0f0]">
          <div className="flex h-[14px] shrink-0 items-center border-b border-[#a9a9a9] pr-1">
            <svg viewBox="0 0 16 14" className="h-[14px] w-4 shrink-0" aria-hidden="true"><path d="M1 14L14 1h2v13z" fill="#fff" /><path d="M1 14L14 .5h2" fill="none" stroke="#999" /></svg>
            <div className="flex h-[14px] w-[177px] items-center border-t border-r border-[#999] bg-white font-medium">
              <svg viewBox="0 0 10 10" className="mr-2 size-[10px]" aria-hidden="true"><path d="M0 0h10v10H0z" fill="#efebc9" /><path d="M0 3.500h10M0 6.500h10M3.500 0v10M6.500 0v10" stroke="#d5cfa0" strokeWidth=".5" /></svg>
              <span className="flex-1 whitespace-pre">{"24-1700 BA... AMI TAKIM  -  20 parca(lar)"}</span>
              <button type="button" aria-label="Sekmeyi kapat" className="mr-[3px]">
                <svg viewBox="0 0 8 8" className="size-[6px]"><path d="M1 1l6 6M7 1L1 7" fill="none" stroke="#111" strokeWidth="1.300" /></svg>
              </button>
            </div>
            <span className="ml-auto"><Caret /></span>
          </div>
          <div className="flex h-[54px] shrink-0 items-start border-b border-[#7f9a9a] pt-[2px] pr-[5px] pl-[3px]">
            <div className="grid w-[1073px] grid-cols-14 items-start">
              {PARTS.map((part, i) => <Part key={part[2] + i} index={i} />)}
            </div>
            <div className="mt-[10px] ml-auto h-[11px] w-px bg-[#666]" />
          </div>
          <div className="flex min-h-0 flex-1 pl-px">
            <Canvas />
            <div className="flex w-[13px] items-center justify-center"><div className="mt-[58px] h-[18%] w-px bg-[#777]" /></div>
          </div>
          <div className="flex h-3 shrink-0 items-center"><div className="ml-[30%] h-px w-[37%] bg-[#606060]" /></div>
        </main>
        <Panel />
      </div>

      <div className="shrink-0"><BottomBar /></div>
      <footer className="flex h-[13px] shrink-0 items-center gap-1 border-t border-[#dfe1e6] bg-[#f0f0f0] px-[3px] pt-px leading-3">
        <span className="flex-1">Hazır</span>
        <span className="text-[#777]">CAP</span>
        <span className="font-medium">NUM</span>
        <span className="-mr-[2px] text-[#777]">SCRL</span>
      </footer>
    </div>
  );
}
